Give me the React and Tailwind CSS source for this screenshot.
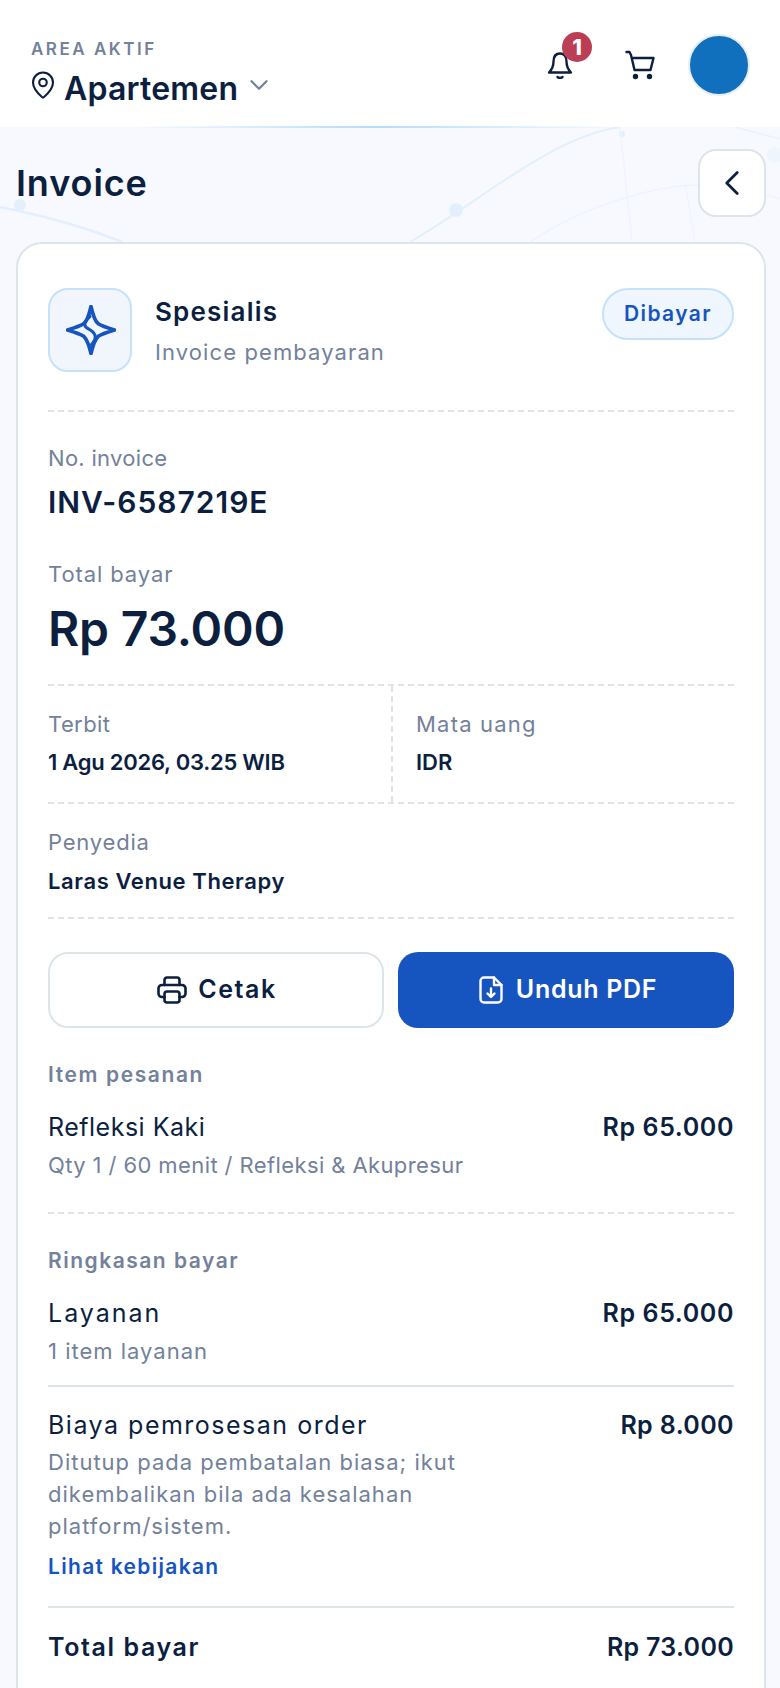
import { ChevronDown, ChevronLeft, MapPin } from "lucide-react";

const dashed = "border-t-2 border-dashed border-[#dde5ea]";

function Label({ children, className = "tracking-[0.6px]" }) {
  return <p className={`text-[22px] leading-[32px] text-[#73819a] ${className}`}>{children}</p>;
}

function Row({ title, sub, price, titleTrack, subTrack, priceTrack }) {
  return (
    <div className="flex items-start justify-between">
      <div>
        <p className={`text-[25px] leading-[36px] text-[#0c1f3f] ${titleTrack}`}>{title}</p>
        <p className={`mt-[4px] text-[22px] leading-[32px] text-[#73819a] ${subTrack}`}>{sub}</p>
      </div>
      <p className={`text-[25px] leading-[36px] font-semibold text-[#0c1f3f] ${priceTrack}`}>{price}</p>
    </div>
  );
}

export default function App() {
  return (
    <div className="relative h-[1688px] overflow-hidden bg-[#f7f9fe] font-['Inter',sans-serif]">
      {/* faint network lines behind the title */}
      <svg className="absolute left-0 top-[127px]" width="780" height="120" fill="none">
        <path d="M0 80 C50 90 90 102 122 115" stroke="#e3effc" strokeWidth="2.5" />
        <circle cx="20" cy="78" r="6" fill="#e3effc" />
        <path d="M410 115 C480 75 550 10 620 0" stroke="#e3effc" strokeWidth="2" />
        <circle cx="456" cy="83" r="7" fill="#e3effc" />
        <circle cx="622" cy="7" r="3" fill="#e3effc" />
        <path d="M620 0 L632 115" stroke="#eef4fc" strokeWidth="1.5" />
        <path d="M685 55 L695 115" stroke="#f0f5fc" strokeWidth="1.5" />
        <path d="M530 115 C590 75 660 58 700 58 C730 58 760 65 780 72" stroke="#eef4fc" strokeWidth="1.5" />
        <path d="M735 0 L780 12" stroke="#e9f2fc" strokeWidth="1.5" />
        <circle cx="775" cy="28" r="8" fill="#eff5fd" />
      </svg>

      <header className="relative flex h-[127px] items-start justify-between bg-white pl-[31px] pr-[30px]">
        <div className="absolute bottom-[-1px] left-[130px] h-[2px] w-[490px] bg-linear-to-r from-transparent via-[#b5dcfd] to-transparent" />
        <div className="pt-[38px]">
          <p className="text-[17px] leading-[22px] font-semibold tracking-[2.5px] text-[#73819a]">AREA AKTIF</p>
          <div className="mt-[9px] flex items-center">
            <MapPin size={30} strokeWidth={1.7} className="ml-[-3px] mb-[8px] text-[#0c1f3f]" />
            <span className="ml-[6px] text-[32px] leading-[40px] font-semibold tracking-[0.2px] text-[#0c1f3f]">Apartemen</span>
            <ChevronDown size={30} strokeWidth={1.8} className="ml-[6px] mb-[8px] text-[#73819a]" />
          </div>
        </div>
        <div className="flex items-center pt-[34px]">
          <div className="relative h-[28px] w-[26px]">
            <svg width="26" height="28" viewBox="0 0 26 28" fill="none" stroke="#0c1f3f" strokeWidth="2.4" strokeLinecap="round" strokeLinejoin="round">
              <path d="M2 21.5 C4.5 19 6.5 16 6.5 10.5 C6.5 5.5 9 2.5 13 2.5 C17 2.5 19.5 5.5 19.5 10.5 C19.5 16 21.5 19 24 21.5 Z" />
              <path d="M10.5 26 Q13 27.8 15.500 26" />
            </svg>
            <span className="absolute left-[15px] top-[-19px] flex h-[30px] w-[30px] items-center justify-center rounded-full bg-[#bc3e55] text-[22px] font-extrabold text-white">1</span>
          </div>
          <svg width="30" height="30" viewBox="0 0 30 30" fill="none" stroke="#0c1f3f" strokeWidth="2.4" strokeLinecap="round" strokeLinejoin="round" className="ml-[52px]">
            <path d="M1.500 2 H4.500 L6 5 L9.500 20 H25.500 L28.500 8 H7" />
            <circle cx="10.500" cy="26.500" r="1.500" fill="#0c1f3f" />
            <circle cx="24.500" cy="26.500" r="1.500" fill="#0c1f3f" />
          </svg>
          <div className="ml-[33px] h-[62px] w-[62px] rounded-full border-2 border-[#e9edf3] bg-[#1070bd]" />
        </div>
      </header>

      <main className="relative pl-[16px] pr-[14px]">
        <div className="flex h-[115px] items-center justify-between">
          <h1 className="mt-[-4px] text-[36px] font-semibold tracking-[0.9px] text-[#0c1f3f]">Invoice</h1>
          <button className="mt-[-4px] flex h-[68px] w-[68px] items-center justify-center rounded-[18px] border-2 border-[#dde5ea] bg-white text-[#0c1f3f]">
            <ChevronLeft size={42} strokeWidth={1.6} />
          </button>
        </div>

        <section className="rounded-t-[26px] border-2 border-[#dde5ea] bg-white px-[30px] pt-[44px] pb-[40px]">
          <div className="flex items-start justify-between">
            <div className="flex">
              <div className="flex h-[84px] w-[84px] items-center justify-center rounded-[20px] border-2 border-[#c4e2fc] bg-[#f1f6fc]">
                <svg width="50" height="50" viewBox="0 0 48 48" fill="none" stroke="#1654c0" strokeWidth="3.6" strokeLinejoin="round" strokeLinecap="round" className="ml-[2px]">
                  <path d="M24 1.500 C26 10 28 16 31 18 C34 20 40 22 46.500 24 C40 26 34 28 31 30 C28 33 26 38 24 46.500 C22 38 20 33 17 30 C14 28 8 26 1.500 24 C8 22 14 20 17 18 C20 16 22 10 24 1.500 Z" />
                  <path d="M23 11 C17 16 16 20 21.500 23 C28 26.500 31 31 24.500 38" strokeWidth="3" />
                </svg>
              </div>
              <div className="ml-[23px]">
                <p className="mt-[6px] text-[26px] leading-[36px] font-semibold tracking-[1.2px] text-[#0c1f3f]">Spesialis</p>
                <p className="mt-[6px] text-[22px] leading-[32px] tracking-[1.1px] text-[#73819a]">Invoice pembayaran</p>
              </div>
            </div>
            <span className="rounded-full border-2 border-[#c4e2fc] bg-[#eff6fd] px-[20px] py-[9px] text-[21px] leading-[30px] font-semibold tracking-[1.4px] text-[#1654c0]">Dibayar</span>
          </div>

          <div className={`${dashed} mt-[38px]`} />
          <div className="mt-[30px]"><Label className="tracking-[0.3px]">No. invoice</Label></div>
          <p className="mt-[8px] text-[30px] leading-[40px] font-semibold tracking-[1px] text-[#0c1f3f]">INV-6587219E</p>
          <div className="mt-[36px]"><Label className="tracking-[0.9px]">Total bayar</Label></div>
          <p className="mt-[9px] text-[48px] leading-[60px] font-semibold tracking-[-0.2px] text-[#0c1f3f]">Rp 73.000</p>

          <div className={`${dashed} mt-[25px]`} />
          <div className="grid grid-cols-2">
            <div className="h-[116px] pt-[22px]">
              <Label className="tracking-[0.4px]">Terbit</Label>
              <p className="mt-[6px] text-[22px] leading-[32px] font-semibold tracking-[-0.25px] text-[#0c1f3f]">1 Agu 2026, 03.25 WIB</p>
            </div>
            <div className="h-[116px] border-l-2 border-dashed border-[#dde5ea] pl-[23px] pt-[22px]">
              <Label className="tracking-[1.2px]">Mata uang</Label>
              <p className="mt-[6px] text-[22px] leading-[32px] font-semibold text-[#0c1f3f]">IDR</p>
            </div>
          </div>
          <div className={dashed} />
          <div className="h-[113px] pt-[22px]">
            <Label className="tracking-[0.8px]">Penyedia</Label>
            <p className="mt-[7px] text-[22px] leading-[32px] font-semibold tracking-[0.6px] text-[#0c1f3f]">Laras Venue Therapy</p>
          </div>
          <div className={dashed} />

          <div className="mt-[33px] grid grid-cols-2 gap-[14px]">
            <button className="flex h-[76px] items-center justify-center gap-[11px] rounded-[20px] border-2 border-[#dde5ea] bg-white pl-[2px] text-[25px] font-semibold tracking-[1.6px] text-[#0c1f3f]">
              <svg width="30" height="28" viewBox="0 0 30 28" fill="none" stroke="#0c1f3f" strokeWidth="2.6" strokeLinejoin="round" strokeLinecap="round">
                <path d="M7.500 9 V4 A2.500 2.500 0 0 1 10 1.500 H20 A2.500 2.500 0 0 1 22.500 4 V9" />
                <path d="M7.500 21 H5 A3.500 3.500 0 0 1 1.500 17.500 V12.500 A3.500 3.500 0 0 1 5 9 H25 A3.500 3.500 0 0 1 28.500 12.500 V17.500 A3.500 3.500 0 0 1 25 21 H22.500" />
                <rect x="7.500" y="15.500" width="15" height="11" rx="2.500" />
              </svg>
              Cetak
            </button>
            <button className="flex h-[76px] items-center justify-center gap-[13px] rounded-[20px] bg-[#1654c0] pl-[4px] text-[25px] font-semibold tracking-[0.7px] text-white">
              <svg width="24" height="28" viewBox="0 0 24 28" fill="none" stroke="#ffffff" strokeWidth="2.4" strokeLinejoin="round" strokeLinecap="round">
                <path d="M15 1.500 H5 A3.500 3.500 0 0 0 1.500 5 V23 A3.500 3.500 0 0 0 5 26.500 H19 A3.500 3.500 0 0 0 22.500 23 V9 Z" />
                <path d="M15 1.500 V9 H22.500" />
                <path d="M12 12.500 V20.500 M8.500 17.500 L12 21 L15.500 17.500" />
              </svg>
              Unduh PDF
            </button>
          </div>

          <p className="mt-[32px] text-[21px] leading-[30px] font-semibold tracking-[1.6px] text-[#73819a]">Item pesanan</p>
          <div className="mt-[19px]">
            <Row title="Refleksi Kaki" sub="Qty 1 / 60 menit / Refleksi & Akupresur" price="Rp 65.000" titleTrack="tracking-[0.5px]" subTrack="tracking-[0.4px]" priceTrack="tracking-[0.6px]" />
          </div>
          <div className={`${dashed} mt-[31px]`} />

          <p className="mt-[32px] text-[21px] leading-[30px] font-semibold tracking-[1.5px] text-[#73819a]">Ringkasan bayar</p>
          <div className="mt-[19px]">
            <Row title="Layanan" sub="1 item layanan" price="Rp 65.000" titleTrack="tracking-[2px]" subTrack="tracking-[1px]" priceTrack="tracking-[0.6px]" />
          </div>
          <div className="mt-[18px] border-t-2 border-[#dde5ea]" />
          <div className="mt-[20px] flex items-start justify-between">
            <div className="w-[440px]">
              <p className="text-[25px] leading-[36px] tracking-[1.5px] text-[#0c1f3f]">Biaya pemrosesan order</p>
              <p className="mt-[3px] text-[22px] leading-[32px] tracking-[1px] text-[#73819a]">Ditutup pada pembatalan biasa; ikut dikembalikan bila ada kesalahan platform/sistem.</p>
              <p className="mt-[10px] text-[21px] leading-[30px] font-semibold tracking-[1.3px] text-[#1654c0]">Lihat kebijakan</p>
            </div>
            <p className="text-[25px] leading-[36px] font-semibold tracking-[0.4px] text-[#0c1f3f]">Rp 8.000</p>
          </div>
          <div className="mt-[24px] border-t-2 border-[#dde5ea]" />
          <div className="mt-[21px] flex items-center justify-between text-[25px] leading-[36px] font-semibold text-[#0c1f3f]">
            <span className="tracking-[1.6px]">Total bayar</span>
            <span className="tracking-[0.3px]">Rp 73.000</span>
          </div>
        </section>
      </main>
    </div>
  );
}
